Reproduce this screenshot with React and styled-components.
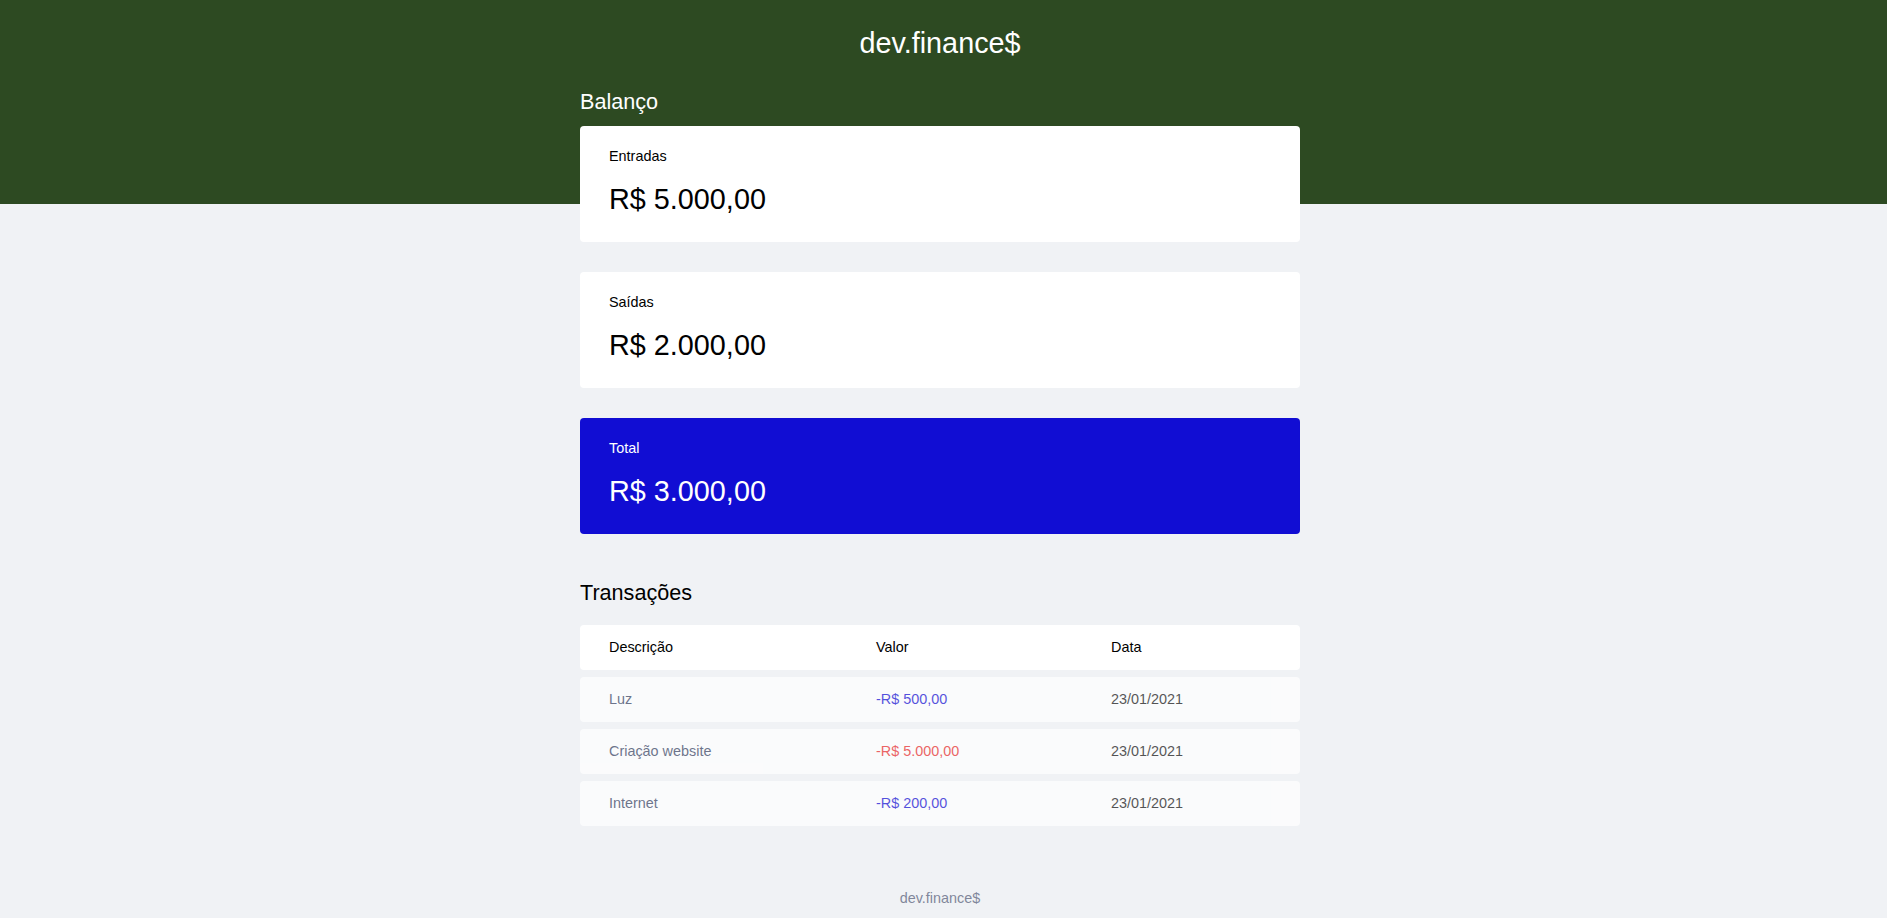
import * as React from "react";
import styled, { createGlobalStyle } from 'styled-components';

const GREEN = '#2d4a22';
const BLUE = '#110dd3';
const DARK = '#363f5f';

const GlobalStyle = createGlobalStyle`
  * { box-sizing: border-box; }
  body {
    margin: 0;
    background: #f0f2f5;
    font-family: "Liberation Sans", Arial, sans-serif;
    font-size: 14.4px;
  }
`;

const Header = styled.header`
  background: ${GREEN};
  padding: 27px 7px 145px 0;
  text-align: center;
`;

const Logo = styled.h1`
  margin: 0;
  color: #fff;
  font-size: 28.8px;
  line-height: 32px;
  font-weight: 400;
`;

// keeps the column centred on the same axis as the reference
const Main = styled.main`
  padding-right: 7px;
`;

const Container = styled.div`
  width: 720px;
  margin: -114px auto 0;
`;

const SectionTitle = styled.h2`
  margin: ${p => (p.$top ? `${p.$top}px` : 0)} 0 ${p => p.$bottom}px;
  font-size: 21.6px;
  line-height: 24px;
  font-weight: 400;
  color: ${p => (p.$light ? '#fff' : '#000')};
`;

const Card = styled.div`
  background: ${p => (p.$total ? BLUE : '#fff')};
  color: ${p => (p.$total ? '#fff' : '#000')};
  border-radius: 4px;
  padding: 22px 29px 22.5px;
  margin-bottom: 30px;
`;

const CardTitle = styled.h3`
  margin: 0;
  font-size: 14.4px;
  line-height: 16.5px;
  font-weight: 400;
`;

const CardValue = styled.p`
  margin: 13px 0 0;
  font-size: 28.8px;
  line-height: 42px;
`;

const Table = styled.table`
  width: 100%;
  table-layout: fixed;
  border-spacing: 0 7px;
`;

const Th = styled.th`
  background: #fff;
  color: #000;
  font-weight: 400;
  text-align: left;
  padding: 14px 29px;
  line-height: 17px;
  &:first-child { border-radius: 4px 0 0 4px; }
  &:last-child { border-radius: 0 4px 4px 0; }
`;

const Row = styled.tr`
  opacity: 0.7;
`;

const CELL_COLORS = {
  description: DARK,
  income: BLUE,
  expense: '#e92929',
  date: '#111',
};

const Td = styled.td`
  background: #fff;
  color: ${p => CELL_COLORS[p.$kind]};
  padding: 14px 29px;
  line-height: 17px;
  &:first-child { border-radius: 4px 0 0 4px; }
  &:last-child { border-radius: 0 4px 4px 0; }
`;

const Footer = styled.footer`
  text-align: center;
  padding: 57px 7px 8px 0;
  line-height: 16px;
  color: ${DARK};
  opacity: 0.6;
`;

const CARDS = [
  { title: 'Entradas', value: 'R$ 5.000,00' },
  { title: 'Saídas', value: 'R$ 2.000,00' },
  { title: 'Total', value: 'R$ 3.000,00', total: true },
];

const TRANSACTIONS = [
  { description: 'Luz', amount: '-R$ 500,00', kind: 'income', date: '23/01/2021' },
  { description: 'Criação website', amount: '-R$ 5.000,00', kind: 'expense', date: '23/01/2021' },
  { description: 'Internet', amount: '-R$ 200,00', kind: 'income', date: '23/01/2021' },
];

const App = () => {
  return (
    <>
      <GlobalStyle />
      <Header>
        <Logo>dev.finance$</Logo>
      </Header>
      <Main>
        <Container>
          <section>
            <SectionTitle $light $bottom={12}>Balanço</SectionTitle>
            {CARDS.map(card => (
              <Card key={card.title} $total={card.total}>
                <CardTitle>{card.title}</CardTitle>
                <CardValue>{card.value}</CardValue>
              </Card>
            ))}
          </section>
          <section>
            <SectionTitle $top={47} $bottom={13}>Transações</SectionTitle>
            <Table>
              <colgroup>
                <col style={{ width: 267 }} />
                <col style={{ width: 235 }} />
                <col style={{ width: 218 }} />
              </colgroup>
              <thead>
                <tr>
                  <Th>Descrição</Th>
                  <Th>Valor</Th>
                  <Th>Data</Th>
                </tr>
              </thead>
              <tbody>
                {TRANSACTIONS.map(t => (
                  <Row key={t.description}>
                    <Td $kind="description">{t.description}</Td>
                    <Td $kind={t.kind}>{t.amount}</Td>
                    <Td $kind="date">{t.date}</Td>
                  </Row>
                ))}
              </tbody>
            </Table>
          </section>
        </Container>
      </Main>
      <Footer>dev.finance$</Footer>
    </>
  )
}
export default App;
